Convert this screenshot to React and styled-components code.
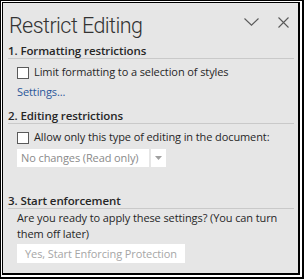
import styled, { createGlobalStyle } from 'styled-components';

const GlobalStyle = createGlobalStyle`
  html, body {
    margin: 0;
    padding: 0;
    background: #fff;
  }
  * {
    box-sizing: border-box;
  }
`;

const Frame = styled.div`
  width: 304px;
  height: 279px;
  background: #fff;
  border: solid #000;
  border-width: 1px 2px 2px 1px;
  padding: 1px 2px 2px 1px;
`;

const Panel = styled.div`
  height: 100%;
  background: #e6e6e6;
  border: solid #000;
  border-width: 1px 2px 2px 1px;
  padding: 0 4px 0 5px;
  font-family: 'Open Sans', 'Liberation Sans', sans-serif;
  font-size: 11px;
  letter-spacing: -0.1px;
  color: #262626;
`;

const Header = styled.div`
  display: flex;
  align-items: flex-start;
  gap: 16px;
  height: 40px;
  padding: 10px 3px 0 1px;
`;

const Title = styled.h1`
  flex: 1;
  margin: 0;
  font-family: Roboto, 'Open Sans', sans-serif;
  font-size: 21.5px;
  line-height: 25px;
  font-weight: 300;
  color: #333;
  letter-spacing: -0.55px;
`;

const IconButton = styled.button`
  display: flex;
  align-items: center;
  justify-content: center;
  width: 16px;
  height: 16px;
  margin-top: 1px;
  padding: 0;
  border: none;
  background: none;
`;

const Section = styled.section`
  margin-bottom: ${({ $gap }) => $gap || 0}px;
`;

const SectionTitle = styled.h2`
  margin: 0;
  border-bottom: 1px solid #c9c9c9;
  font-size: 11.5px;
  font-weight: 600;
  color: #262626;
  line-height: 15px;
`;

const Body = styled.div`
  padding-left: 9px;
  padding-top: ${({ $top }) => $top ?? 5}px;
`;

const CheckRow = styled.label`
  display: flex;
  align-items: flex-start;
  gap: 5px;
  line-height: 16px;
`;

const Box = styled.span`
  flex: none;
  width: 12px;
  height: 12px;
  margin-top: 3px;
  background: #fff;
  border: 1px solid #5a5a5a;
`;

const Link = styled.a`
  display: block;
  margin-top: 4px;
  color: #2b579a;
  line-height: 16px;
  text-decoration: none;
`;

const Select = styled.div`
  display: flex;
  gap: 2px;
  margin-top: 4px;
  height: 18px;
`;

const SelectValue = styled.div`
  width: 132px;
  background: #fff;
  color: #8a8a8a;
  padding-left: 4px;
  line-height: 18px;
`;

const SelectArrow = styled.div`
  width: 15px;
  background: #fff;
  display: flex;
  align-items: center;
  justify-content: center;
`;

const Text = styled.p`
  margin: 0;
  line-height: 16px;
`;

const Button = styled.button`
  display: block;
  margin-top: 2px;
  width: 168px;
  height: 19px;
  padding: 0 0 0 8px;
  border: none;
  background: #fff;
  color: #a6a6a6;
  font: inherit;
  letter-spacing: inherit;
  line-height: 19px;
  text-align: left;
`;

export default function App() {
  return (
    <>
      <GlobalStyle />
      <Frame>
        <Panel>
          <Header>
            <Title>Restrict Editing</Title>
            <IconButton aria-label="Task pane options">
              <svg width="15" height="8" viewBox="0 0 15 8">
                <path d="M0.5 0.5 L7.5 7.2 L14.5 0.5" fill="none" stroke="#5a5a5a" strokeWidth="1.1" />
              </svg>
            </IconButton>
            <IconButton aria-label="Close">
              <svg width="11" height="11" viewBox="0 0 11 11">
                <path d="M0.5 0.5 L10.5 10.5 M10.5 0.5 L0.5 10.5" fill="none" stroke="#5a5a5a" strokeWidth="1.1" />
              </svg>
            </IconButton>
          </Header>

          <Section $gap={8}>
            <SectionTitle>1. Formatting restrictions</SectionTitle>
            <Body>
              <CheckRow>
                <Box />
                Limit formatting to a selection of styles
              </CheckRow>
              <Link href="#">Settings...</Link>
            </Body>
          </Section>

          <Section $gap={26}>
            <SectionTitle>2. Editing restrictions</SectionTitle>
            <Body>
              <CheckRow>
                <Box />
                Allow only this type of editing in the document:
              </CheckRow>
              <Select>
                <SelectValue>No changes (Read only)</SelectValue>
                <SelectArrow>
                  <svg width="7" height="4" viewBox="0 0 7 4">
                    <path d="M0 0 L7 0 L3.5 4 Z" fill="#a0a0a0" />
                  </svg>
                </SelectArrow>
              </Select>
            </Body>
          </Section>

          <Section>
            <SectionTitle>3. Start enforcement</SectionTitle>
            <Body $top={1}>
              <Text>Are you ready to apply these settings? (You can turn them off later)</Text>
              <Button>Yes, Start Enforcing Protection</Button>
            </Body>
          </Section>
        </Panel>
      </Frame>
    </>
  );
}
